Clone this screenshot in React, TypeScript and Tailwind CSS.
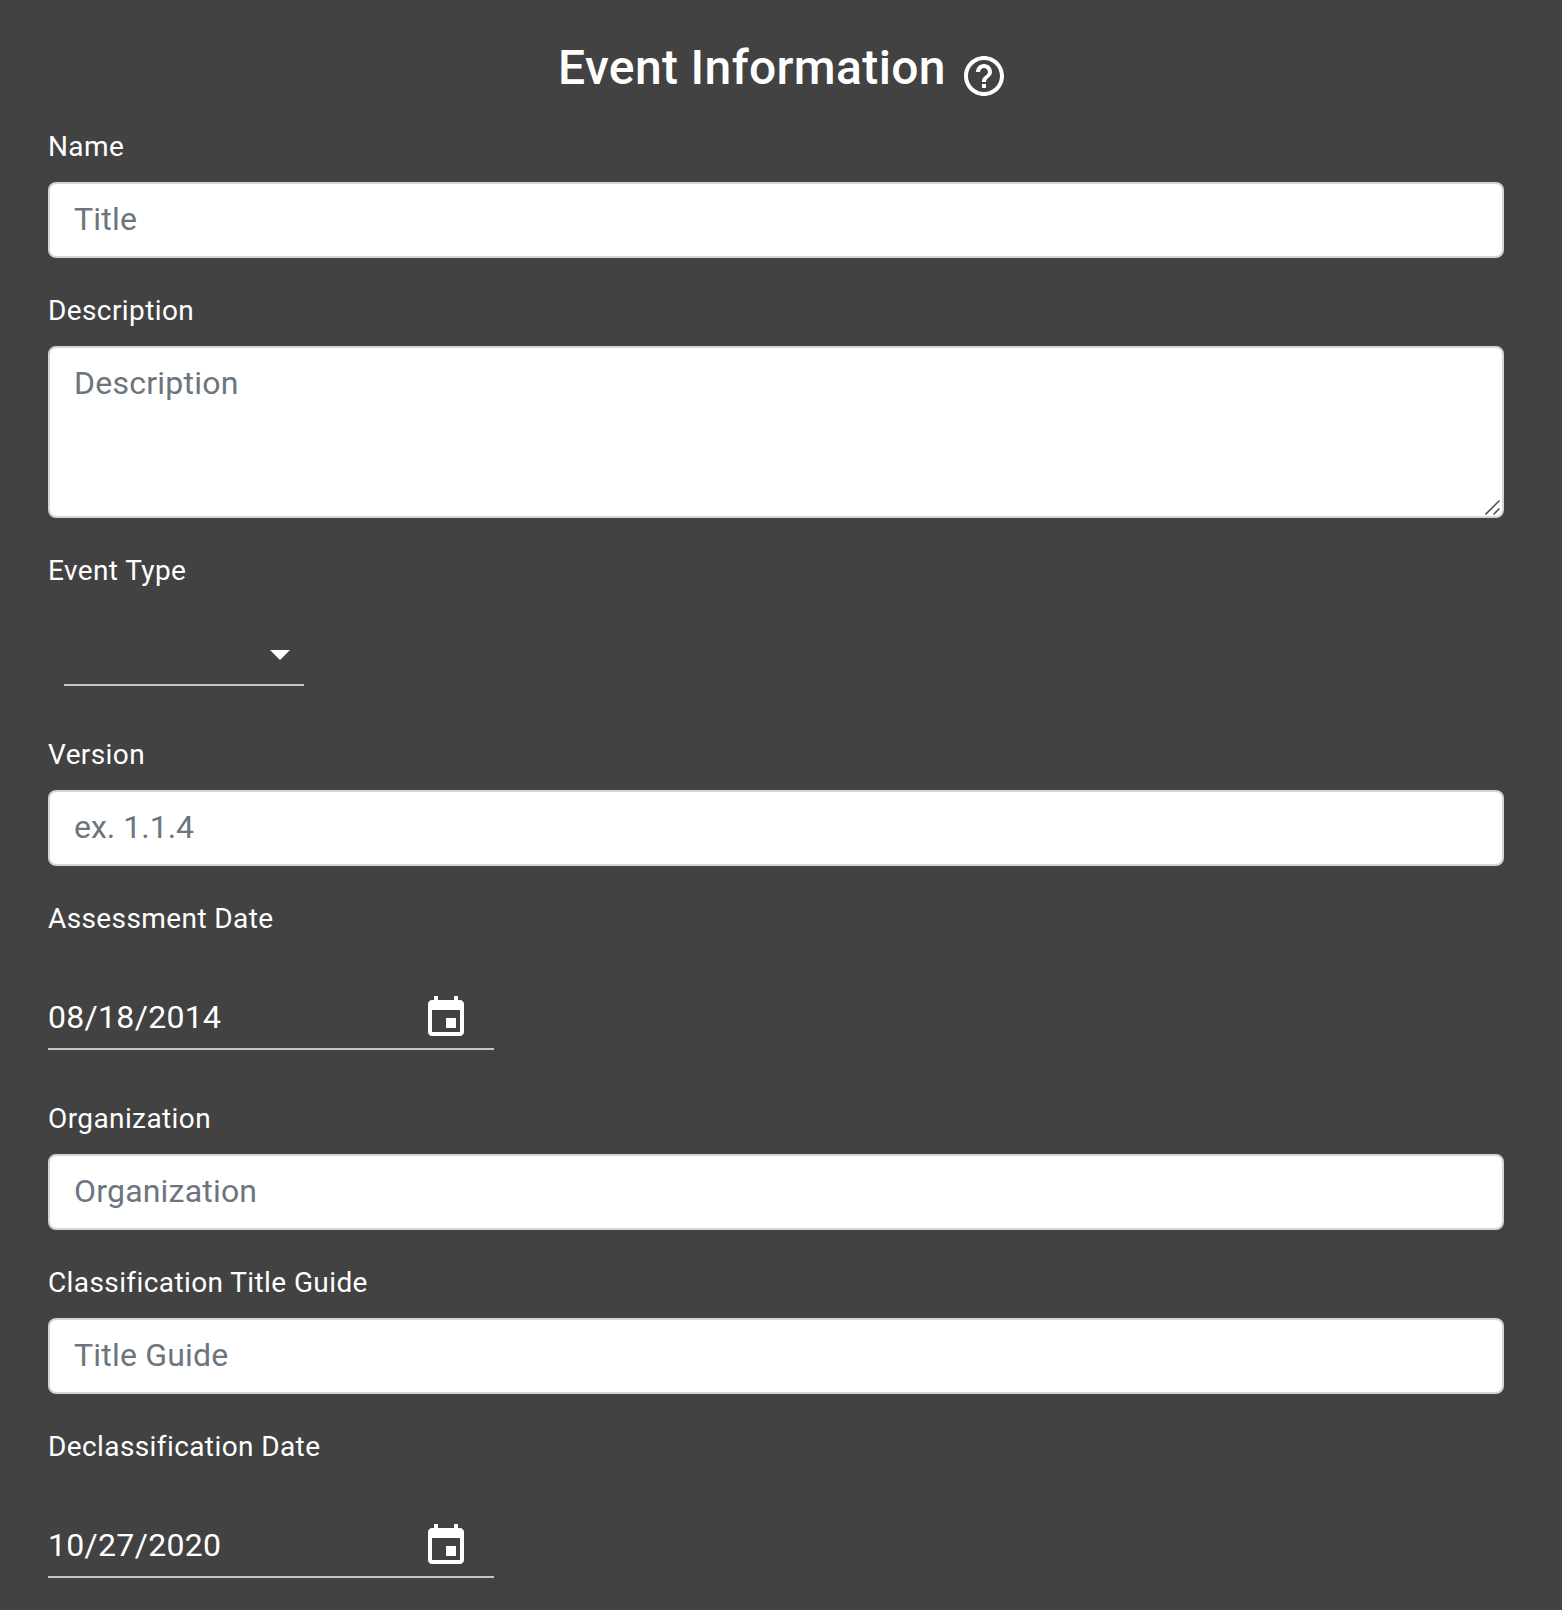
import type { ReactNode } from "react";

function HelpIcon() {
  return (
    <svg viewBox="0 0 24 24" className="size-12 fill-white">
      <path d="M11 18h2v-2h-2v2zm1-16C6.48 2 2 6.48 2 12s4.48 10 10 10 10-4.48 10-10S17.52 2 12 2zm0 18c-4.41 0-8-3.59-8-8s3.59-8 8-8 8 3.59 8 8-3.59 8-8 8zm0-14c-2.21 0-4 1.79-4 4h2c0-1.1.9-2 2-2s2 .9 2 2c0 2-3 1.75-3 5h2c0-2.25 3-2.5 3-5 0-2.21-1.79-4-4-4z" />
    </svg>
  );
}

function CalendarIcon() {
  return (
    <svg viewBox="0 0 24 24" className="size-12 fill-white">
      <path d="M17 12h-5v5h5v-5zM16 1v2H8V1H6v2H5c-1.11 0-1.99.9-1.99 2L3 19c0 1.1.89 2 2 2h14c1.1 0 2-.9 2-2V5c0-1.1-.9-2-2-2h-1V1h-2zm3 18H5V8h14v11z" />
    </svg>
  );
}

function Field({ label, children }: { label: string; children: ReactNode }) {
  return (
    <label className="flex flex-col">
      <span className="h-10 text-[28px] leading-[42px] tracking-[0.4px]">{label}</span>
      {children}
    </label>
  );
}

const boxClass =
  "block w-full rounded-lg border-2 border-[#ced4da] bg-white px-6 pt-[11px] pb-[13px] text-[32px] leading-[48px] text-[#495057] placeholder:text-[#6c757d] placeholder:opacity-100 outline-none";

function TextField({
  label,
  placeholder,
  tracking = "tracking-[0.2px]",
}: {
  label: string;
  placeholder: string;
  tracking?: string;
}) {
  return (
    <Field label={label}>
      <input type="text" placeholder={placeholder} className={`${boxClass} ${tracking} mt-4 h-[76px]`} />
    </Field>
  );
}

function DateField({ label, value }: { label: string; value: string }) {
  return (
    <Field label={label}>
      <div className="mt-[46px] mb-4 flex h-[66px] w-[446px] items-start border-b-2 border-[#c6c6c6] pr-6">
        <input
          type="text"
          defaultValue={value}
          className="mt-[9px] h-[48px] min-w-0 flex-1 bg-transparent text-[32px] leading-[48px] tracking-[0.3px] outline-none"
        />
        <div className="mt-[10px]">
          <CalendarIcon />
        </div>
      </div>
    </Field>
  );
}

export default function App() {
  return (
    <main className="h-[1610px] overflow-hidden bg-[#424242] pr-[58px] pl-12 font-['Roboto',sans-serif] text-white">
      <header className="flex h-[126px] items-start justify-center gap-[14px] pt-[36px] pl-[14px]">
        <h1 className="text-[48px] leading-[64px] font-medium tracking-[0.36px]">Event Information</h1>
        <div className="mt-4">
          <HelpIcon />
        </div>
      </header>
      <form className="flex flex-col gap-8">
        <TextField label="Name" placeholder="Title" />
        <Field label="Description">
          <div className="relative mt-4">
            <textarea placeholder="Description" className={`${boxClass} h-[172px] resize-none tracking-[0.25px]`} />
            <svg viewBox="0 0 18 18" className="absolute right-px bottom-px size-[18px]" fill="none" stroke="#505050" strokeWidth="1.6">
              <path d="M0.5 15.5 L14.5 1.5 M8.5 15.5 L14.5 9.5" />
            </svg>
          </div>
        </Field>
        <Field label="Event Type">
          <div className="mt-[32px] mb-4 ml-4 flex h-[64px] w-[240px] items-start justify-end border-b-2 border-[#c6c6c6]">
            <svg viewBox="0 0 24 24" className="mt-2 size-12 fill-white">
              <path d="M7 10l5 5 5-5z" />
            </svg>
          </div>
        </Field>
        <TextField label="Version" placeholder="ex. 1.1.4" tracking="tracking-normal" />
        <DateField label="Assessment Date" value="08/18/2014" />
        <TextField label="Organization" placeholder="Organization" />
        <TextField label="Classification Title Guide" placeholder="Title Guide" />
        <DateField label="Declassification Date" value="10/27/2020" />
      </form>
    </main>
  );
}
